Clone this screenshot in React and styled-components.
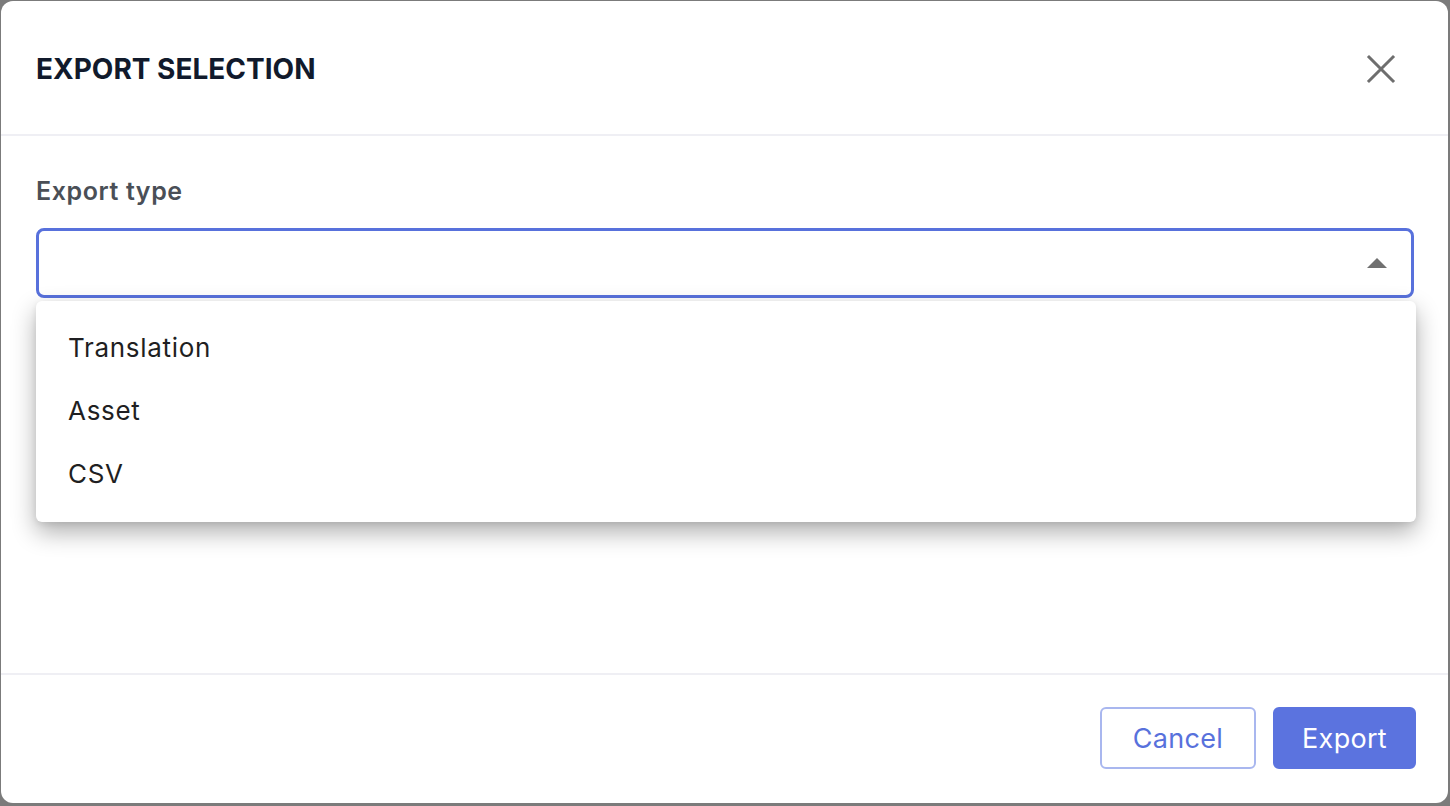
import styled, { createGlobalStyle } from "styled-components";

const GlobalStyle = createGlobalStyle`
  html, body, #root {
    height: 100%;
  }
  body {
    margin: 0;
    background: #7b7b7b;
    font-family: "Inter", "Noto Sans", sans-serif;
    overflow: hidden;
  }
`

const options = ["Translation", "Asset", "CSV"]

export default function App() {
  return (
    <>
      <GlobalStyle />
      <Backdrop>
        <Modal>
          <Header>
            <Title>EXPORT SELECTION</Title>
            <CloseButton aria-label="Close">
              <svg width="30" height="30" viewBox="0 0 30 30">
                <path d="M3 3 L27 27 M27 3 L3 27" stroke="#6e6e6e" strokeWidth="3" strokeLinecap="square" />
              </svg>
            </CloseButton>
          </Header>

          <Body>
            <Label>Export type</Label>
            <SelectBox>
              <Arrow />
            </SelectBox>
            <Menu>
              {options.map((o) => (
                <MenuItem key={o}>{o}</MenuItem>
              ))}
            </Menu>
          </Body>

          <Footer>
            <Button pad="31px">Cancel</Button>
            <Button primary pad="27px">Export</Button>
          </Footer>
        </Modal>
      </Backdrop>
    </>
  )
}

const Backdrop = styled.div`
  height: 100%;
  box-sizing: border-box;
  padding: 1px 2px 3px 1px;
  display: flex;
`

const Modal = styled.div`
  flex: 1;
  background: #fff;
  border-radius: 12px;
  display: flex;
  flex-direction: column;
  overflow: hidden;
`

const Header = styled.div`
  height: 135px;
  flex-shrink: 0;
  box-sizing: border-box;
  border-bottom: 2px solid #efeff4;
  padding: 2px 52px 0 35px;
  display: flex;
  align-items: center;
  justify-content: space-between;
`

const Title = styled.h2`
  margin: 0;
  font-size: 28px;
  font-weight: 700;
  color: #111a2c;
  letter-spacing: 0;
`

const CloseButton = styled.button`
  border: none;
  background: none;
  padding: 0;
  width: 30px;
  height: 30px;
  cursor: pointer;
  display: flex;
`

const Body = styled.div`
  flex: 1;
  position: relative;
  padding: 40px 34px 0 35px;
`

const Label = styled.div`
  font-size: 25px;
  font-weight: 600;
  letter-spacing: 0.6px;
  color: #4a4f57;
  margin-bottom: 22px;
`

const SelectBox = styled.div`
  height: 70px;
  box-sizing: border-box;
  border: 3px solid #5871dc;
  border-radius: 8px;
  display: flex;
  align-items: center;
  justify-content: flex-end;
  padding-right: 24px;
`

const Arrow = styled.div`
  width: 0;
  height: 0;
  border-left: 10px solid transparent;
  border-right: 10px solid transparent;
  border-bottom: 10px solid #707070;
`

const Menu = styled.div`
  position: absolute;
  top: 165px;
  left: 35px;
  right: 32px;
  background: #fff;
  border-radius: 6px;
  box-shadow: 0 10px 24px rgba(0, 0, 0, 0.32), 0 2px 6px rgba(0, 0, 0, 0.08);
  padding: 15px 0 17px;
  z-index: 2;
`

const MenuItem = styled.div`
  height: 63px;
  display: flex;
  align-items: center;
  padding-left: 32px;
  font-size: 26px;
  letter-spacing: 0.7px;
  color: #1f1f22;
  cursor: pointer;
`

const Footer = styled.div`
  height: 130px;
  flex-shrink: 0;
  box-sizing: border-box;
  border-top: 2px solid #efeff4;
  padding: 0 32px 2px 0;
  display: flex;
  align-items: center;
  justify-content: flex-end;
  gap: 17px;
`

const Button = styled.button`
  height: 62px;
  padding: 0 ${(p) => p.pad};
  border-radius: 6px;
  font-family: inherit;
  font-size: 27px;
  letter-spacing: 0.3px;
  cursor: pointer;
  border: 2px solid ${(p) => (p.primary ? "#5b73df" : "#a9b7ef")};
  background: ${(p) => (p.primary ? "#5b73df" : "#fff")};
  color: ${(p) => (p.primary ? "#fff" : "#5871dc")};
`
